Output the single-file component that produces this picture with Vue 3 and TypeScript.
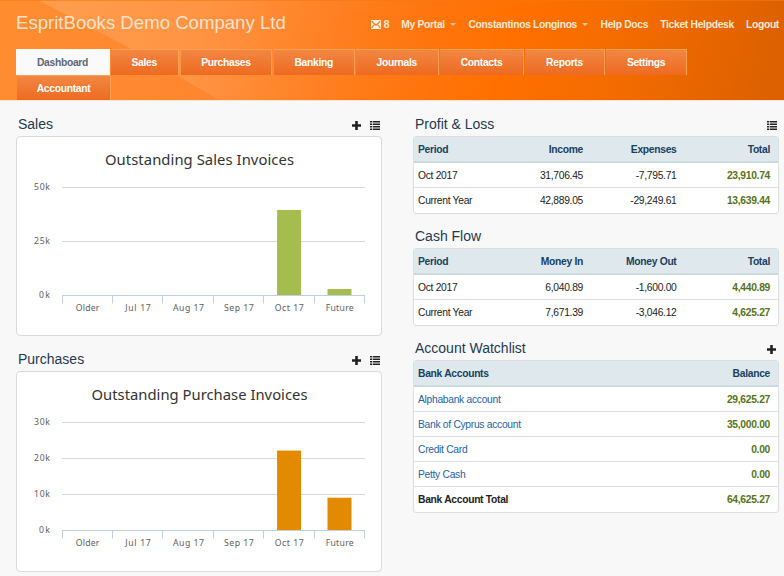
<script setup lang="ts">
interface Tab { label: string; size: string; active?: boolean }
interface Category { label: string; width: number; value: number }
interface Chart {
  heading: string
  title: string
  titleWidth: number
  color: string
  max: number
  ticks: number[]
  values: number[]
}
interface Report {
  heading: string
  icon: 'list' | 'plus' | null
  columns: string[]
  rows: { cells: string[]; link?: boolean; total?: boolean }[]
}

const tabs: Tab[] = [
  { label: 'Dashboard', size: 'w-dashboard', active: true },
  { label: 'Sales', size: 'w-sales' },
  { label: 'Purchases', size: 'w-purchases' },
  { label: 'Banking', size: 'w-banking' },
  { label: 'Journals', size: 'w-journals' },
  { label: 'Contacts', size: 'w-contacts' },
  { label: 'Reports', size: 'w-reports' },
  { label: 'Settings', size: 'w-settings' },
  { label: 'Accountant', size: 'w-accountant' },
]

const charts: Chart[] = [
  { heading: 'Sales', title: 'Outstanding Sales Invoices', titleWidth: 189, color: '#a5bd4e', max: 50, ticks: [50, 25, 0], values: [0, 0, 0, 0, 39.6, 3] },
  { heading: 'Purchases', title: 'Outstanding Purchase Invoices', titleWidth: 216, color: '#e28a00', max: 30, ticks: [30, 20, 10, 0], values: [0, 0, 0, 0, 22.2, 9.1] },
]

const labels = [
  { label: 'Older', width: 23.5 },
  { label: 'Jul 17', width: 25.5 },
  { label: 'Aug 17', width: 31 },
  { label: 'Sep 17', width: 29.5 },
  { label: 'Oct 17', width: 29 },
  { label: 'Future', width: 28 },
]

// Plot area inside the 366 x 200 panel
const left = 46
const step = 50.42
const top = 51.5
const base = 159.5

const y = (chart: Chart, v: number): number => base - (v / chart.max) * (base - top)
const gridY = (chart: Chart, v: number): number => Math.floor(y(chart, v)) + 0.5
const categories = (chart: Chart): Category[] =>
  labels.map((l, i) => ({ ...l, value: chart.values[i] }))

const reports: Report[] = [
  {
    heading: 'Profit & Loss', icon: 'list',
    columns: ['Period', 'Income', 'Expenses', 'Total'],
    rows: [
      { cells: ['Oct 2017', '31,706.45', '-7,795.71', '23,910.74'] },
      { cells: ['Current Year', '42,889.05', '-29,249.61', '13,639.44'] },
    ],
  },
  {
    heading: 'Cash Flow', icon: null,
    columns: ['Period', 'Money In', 'Money Out', 'Total'],
    rows: [
      { cells: ['Oct 2017', '6,040.89', '-1,600.00', '4,440.89'] },
      { cells: ['Current Year', '7,671.39', '-3,046.12', '4,625.27'] },
    ],
  },
  {
    heading: 'Account Watchlist', icon: 'plus',
    columns: ['Bank Accounts', 'Balance'],
    rows: [
      { cells: ['Alphabank account', '29,625.27'], link: true },
      { cells: ['Bank of Cyprus account', '35,000.00'], link: true },
      { cells: ['Credit Card', '0.00'], link: true },
      { cells: ['Petty Cash', '0.00'], link: true },
      { cells: ['Bank Account Total', '64,625.27'], total: true },
    ],
  },
]
</script>

<template>
  <div class="page">
    <header class="header">
      <svg class="backdrop" width="784" height="101" viewBox="0 0 784 101" aria-hidden="true">
        <defs>
          <linearGradient id="sky" gradientUnits="userSpaceOnUse" x1="0" y1="0" x2="740" y2="180">
            <stop offset="0" stop-color="#ff8d30" />
            <stop offset="0.3" stop-color="#ff8630" />
            <stop offset="0.5" stop-color="#ff7814" />
            <stop offset="0.66" stop-color="#ff7000" />
            <stop offset="0.82" stop-color="#f36b00" />
            <stop offset="1" stop-color="#dd6100" />
          </linearGradient>
          <linearGradient id="beam" gradientUnits="userSpaceOnUse" x1="60" y1="0" x2="470" y2="90">
            <stop offset="0" stop-color="#ffa860" stop-opacity="0.6" />
            <stop offset="0.35" stop-color="#ff9c50" stop-opacity="0.6" />
            <stop offset="1" stop-color="#ff7000" stop-opacity="0" />
          </linearGradient>
        </defs>
        <rect width="784" height="101" fill="url(#sky)" />
        <path d="M38 0H520V101H221L126 46Z" fill="url(#beam)" />
        <path d="M0 .5H784" stroke="#ef7c10" stroke-opacity=".6" />
      </svg>
      <div class="masthead">
        <h1>EspritBooks Demo Company Ltd</h1>
        <div class="account">
          <a class="mail">
            <svg width="10" height="9" viewBox="0 0 10 9"><path d="M0 0H10V9H0Z" fill="#fff3df" /><path d="M.6 1.2L5 5.2L9.4 1.2M.6 8L3.4 4.6M9.4 8L6.6 4.6" fill="none" stroke="#f0770f" stroke-width="1.1" /></svg>
            <span>8</span>
          </a>
          <a class="portal">My Portal<i class="caret"></i></a>
          <a class="user">Constantinos Longinos<i class="caret"></i></a>
          <a class="docs">Help Docs</a>
          <a class="ticket">Ticket Helpdesk</a>
          <a>Logout</a>
        </div>
      </div>
      <nav class="tabs">
        <a v-for="t in tabs" :key="t.label" class="tab" :class="[t.size, { active: t.active }]">{{ t.label }}</a>
      </nav>
    </header>

    <main class="columns">
      <div class="charts">
        <section v-for="c in charts" :key="c.heading" class="block">
          <div class="bar">
            <h2>{{ c.heading }}</h2>
            <div class="tools">
              <svg width="9" height="9" viewBox="0 0 9 9"><path d="M3.2 0H5.8V3.2H9V5.8H5.8V9H3.2V5.8H0V3.2H3.2Z" fill="#222" /></svg>
              <svg width="10" height="9" viewBox="0 0 10 9"><path d="M0 0H2V1.6H0ZM2.7 0H10V1.6H2.7ZM0 2.5H2V4.1H0ZM2.7 2.5H10V4.1H2.7ZM0 5H2V6.6H0ZM2.7 5H10V6.6H2.7ZM0 7.4H2V9H0ZM2.7 7.4H10V9H2.7Z" fill="#222" /></svg>
            </div>
          </div>
          <div class="panel">
            <svg class="chart" width="366" height="200" viewBox="0 0 366 200">
              <text class="title" x="183.5" y="29" text-anchor="middle" :textLength="c.titleWidth">{{ c.title }}</text>
              <g v-for="t in c.ticks" :key="t">
                <line v-if="t" :x1="left" x2="349" :y1="gridY(c, t)" :y2="gridY(c, t)" stroke="#d8d8d8" />
                <text class="label" x="34" :y="gridY(c, t) + 2.6" text-anchor="end" :textLength="t ? 16 : 11">{{ t }}k</text>
              </g>
              <g v-for="(k, i) in categories(c)" :key="k.label">
                <rect v-if="k.value" :x="left + step * i + 13.4" :y="y(c, k.value)" width="24" :height="base - y(c, k.value)" :fill="c.color" />
                <text class="label" :x="left + step * (i + 0.5) + 0.4" y="174.5" text-anchor="middle" :textLength="k.width">{{ k.label }}</text>
              </g>
              <path :d="`M${left} 159.5H349`" stroke="#c0d0e0" />
              <line v-for="n in 7" :key="n" :x1="Math.floor(left + step * (n - 1)) + 0.5" :x2="Math.floor(left + step * (n - 1)) + 0.5" y1="159" y2="167.5" stroke="#c3d0db" />
            </svg>
          </div>
        </section>
      </div>

      <div class="reports">
        <section v-for="r in reports" :key="r.heading" class="report">
          <div class="bar">
            <h2>{{ r.heading }}</h2>
            <div v-if="r.icon" class="tools">
              <svg v-if="r.icon === 'plus'" width="9" height="9" viewBox="0 0 9 9"><path d="M3.2 0H5.8V3.2H9V5.8H5.8V9H3.2V5.8H0V3.2H3.2Z" fill="#222" /></svg>
              <svg v-else width="10" height="9" viewBox="0 0 10 9"><path d="M0 0H2V1.6H0ZM2.7 0H10V1.6H2.7ZM0 2.5H2V4.1H0ZM2.7 2.5H10V4.1H2.7ZM0 5H2V6.6H0ZM2.7 5H10V6.6H2.7ZM0 7.4H2V9H0ZM2.7 7.4H10V9H2.7Z" fill="#222" /></svg>
            </div>
          </div>
          <div class="table" :class="{ two: r.columns.length === 2 }">
            <div class="row head"><span v-for="h in r.columns" :key="h">{{ h }}</span></div>
            <div v-for="row in r.rows" :key="row.cells[0]" class="row" :class="{ link: row.link, total: row.total }">
              <span v-for="(cell, i) in row.cells" :key="i">{{ cell }}</span>
            </div>
          </div>
        </section>
      </div>
    </main>
  </div>
</template>

<style>
body { background: #f8f8f8; overflow: hidden; }
</style>

<style scoped>
.page { width: 784px; height: 576px; overflow: hidden; background: #f8f8f8; font-family: "Liberation Sans", Arial, sans-serif; font-size: 10.3px; letter-spacing: -0.3px; color: #222; }
.page * { box-sizing: border-box; }
h1, h2 { margin: 0; font-weight: 400; white-space: nowrap; letter-spacing: 0; }
.header { position: relative; height: 101px; overflow: hidden; border-bottom: 1px solid #fbe3d0; }
.backdrop { position: absolute; inset: 0; }
.masthead { position: relative; height: 49px; display: flex; justify-content: space-between; padding: 0 5px 0 16px; }
h1 { font-size: 18.6px; line-height: 46px; color: #fce2cb; }
.account { display: flex; height: 48px; align-items: center; font-weight: 700; color: #ffe9d2; white-space: nowrap; }
.account a { display: flex; align-items: center; }
.mail { gap: 3px; margin-right: 12px; }
.portal, .user { margin-right: 12.5px; }
.docs, .ticket { margin-right: 12px; }
.caret { margin-left: 5px; border: 3px solid transparent; border-top: 3px solid #ffc58f; border-bottom: 0; }
.tabs { position: relative; display: flex; flex-wrap: wrap; width: 720px; padding-left: 16px; }
.tab { height: 26px; line-height: 25px; text-align: center; font-weight: 700; color: #fff; background: linear-gradient(#f28742, #ee6a20); border: solid #ff9f4f; border-width: 1px 1px 0 0; margin-right: 2px; }
.tab.active { color: #5d6773; background: #fafafa; border-color: #fafafa; margin-right: 1px; }
.w-dashboard { width: 94px; }
.w-sales { width: 67.5px; margin-right: 2.5px; }
.w-purchases { width: 91px; }
.w-banking { width: 80.5px; margin-right: 1.5px; }
.w-journals { width: 82.5px; margin-right: 1.5px; }
.w-contacts { width: 84px; margin-right: 1px; }
.w-reports { width: 80px; margin-right: 1px; }
.w-settings { width: 81px; margin-right: 20px; }
.w-accountant { width: 94px; margin-left: 1px; }
.columns { display: flex; gap: 31px; padding: 12px 5px 0 16px; }
.charts { width: 366px; }
.reports { width: 366px; }
.bar { display: flex; justify-content: space-between; height: 23px; padding: 0 2px; }
.report:last-child .bar { padding-right: 3px; }
h2 { font-size: 14px; line-height: 23px; color: #1f3a52; }
.tools { display: flex; gap: 9px; padding-top: 8px; }
.block { margin-bottom: 12px; }
.block .panel { height: 200px; border: 1px solid #d9dadb; border-radius: 4px; background: #fff; }
.block:last-child .panel { height: 201px; }
.chart { display: block; margin: -1px; }
.title { font: 14.8px "Noto Sans", sans-serif; fill: #333; letter-spacing: 0; }
.label { font: 8.7px "Noto Sans", sans-serif; fill: #606060; letter-spacing: 0; }
.table { border: 1px solid #dbdfe1; border-radius: 3px; background: #fff; overflow: hidden; }
.row { display: grid; grid-template-columns: 71px 94px 93.5px 93.5px; height: 25px; line-height: 26px; padding-left: 4px; border-bottom: 1px solid #dedede; white-space: nowrap; }
.row:last-child { border-bottom: 0; }
.two .row { grid-template-columns: 180px 172px; }
.row span { height: 24px; text-align: right; }
.row span:first-child { text-align: left; }
.row.head { height: 26px; background: #dfe9ed; color: #174060; font-weight: 700; border-bottom: 2px solid #cbd8de; }
.row:not(.head) span:last-child { font-weight: 700; color: #57731a; }
.link span:first-child { color: #2463a8; }
.total { font-weight: 700; }
.report { margin-bottom: 11px; }
</style>
